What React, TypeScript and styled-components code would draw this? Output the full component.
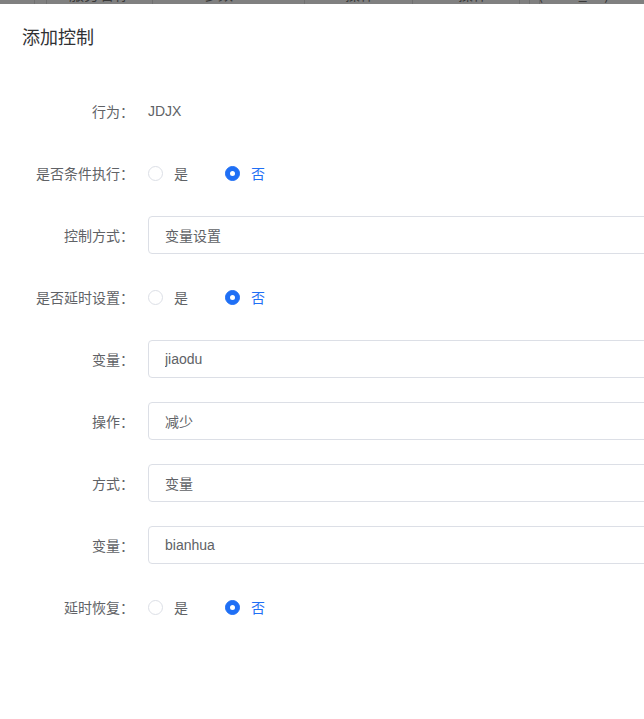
import React, { useState } from 'react'
import styled, { createGlobalStyle } from 'styled-components'

const GlobalStyle = createGlobalStyle`
  html, body {
    margin: 0;
    padding: 0;
    overflow: hidden;
    background: #7f7f7f;
  }
  * { box-sizing: border-box; }
`

const Page = styled.div`
  width: 644px;
  height: 719px;
  overflow: hidden;
  font-family: "Noto Sans CJK SC", "Noto Sans", "Liberation Sans", sans-serif;
`

// the table header behind the modal mask, only its bottom edge shows
const Backdrop = styled.div`
  height: 4px;
  overflow: hidden;
  background: #808080;
  display: flex;
`

const BackCell = styled.div<{ $w: number }>`
  flex: 0 0 ${p => p.$w}px;
  height: 4px;
  border-right: 1px solid #707070;
  position: relative;
  overflow: hidden;
`

const BackText = styled.span<{ $x: number }>`
  position: absolute;
  left: ${p => p.$x}px;
  top: -14px;
  font-size: 15px;
  line-height: 16px;
  color: #3a3a3a;
  white-space: nowrap;
`

const Dialog = styled.div`
  width: 900px;
  height: 715px;
  background: #fff;
`

const Header = styled.div`
  padding: 20px 22px 10px;
`

const Title = styled.h2`
  margin: 0;
  font-size: 18px;
  line-height: 24px;
  font-weight: 400;
  color: #303133;
`

const Form = styled.form`
  padding-top: 33px;
  display: flex;
  flex-direction: column;
  gap: 22px;
`

const Row = styled.div`
  display: flex;
  align-items: center;
  height: 40px;
`

const Label = styled.label`
  flex: 0 0 148px;
  padding-right: 14px;
  text-align: right;
  font-size: 14px;
  color: #606266;
`

const Plain = styled.span`
  font-family: "Liberation Sans", "Noto Sans CJK SC", sans-serif;
  font-size: 14px;
  color: #606266;
`

const Input = styled.input`
  width: 640px;
  height: 38px;
  border: 1px solid #dcdfe6;
  border-radius: 4px;
  padding: 0 16px;
  font-family: "Liberation Sans", "Noto Sans CJK SC", sans-serif;
  font-size: 14px;
  color: #606266;
  background: #fff;
  outline: none;
`

const RadioGroup = styled.div`
  display: flex;
  align-items: center;
`

const RadioItem = styled.label<{ $checked: boolean }>`
  display: flex;
  align-items: center;
  margin-right: 37px;
  cursor: pointer;
  font-size: 14px;
  color: ${p => (p.$checked ? '#1f6ff5' : '#606266')};
`

const Circle = styled.span<{ $checked: boolean }>`
  width: 15px;
  height: 15px;
  border-radius: 50%;
  margin-right: 11px;
  border: 1px solid ${p => (p.$checked ? '#1f6ff5' : '#dcdfe6')};
  background: ${p => (p.$checked ? '#1f6ff5' : '#fff')};
  display: flex;
  align-items: center;
  justify-content: center;

  &::after {
    content: '';
    width: 5px;
    height: 5px;
    border-radius: 50%;
    background: #fff;
    display: ${p => (p.$checked ? 'block' : 'none')};
  }
`

function YesNo({ value, onChange }: { value: boolean; onChange: (v: boolean) => void }) {
  return (
    <RadioGroup>
      <RadioItem $checked={value} onClick={() => onChange(true)}>
        <Circle $checked={value} />是
      </RadioItem>
      <RadioItem $checked={!value} onClick={() => onChange(false)}>
        <Circle $checked={!value} />否
      </RadioItem>
    </RadioGroup>
  )
}

export default function App() {
  const [conditional, setConditional] = useState(false)
  const [delayed, setDelayed] = useState(false)
  const [restore, setRestore] = useState(false)

  return (
    <Page>
      <GlobalStyle />
      <Backdrop>
        <BackCell $w={35} />
        <BackCell $w={12} />
        <BackCell $w={106}><BackText $x={22}>服务名称</BackText></BackCell>
        <BackCell $w={152}><BackText $x={50}>参数</BackText></BackCell>
        <BackCell $w={108}><BackText $x={40}>操作</BackText></BackCell>
        <BackCell $w={107}><BackText $x={45}>操作</BackText></BackCell>
        <BackCell $w={10} />
        <BackCell $w={10} />
        <BackCell $w={120}><BackText $x={-2}>(GPIO_A4)PWM</BackText></BackCell>
      </Backdrop>
      <Dialog>
        <Header>
          <Title>添加控制</Title>
        </Header>
        <Form onSubmit={e => e.preventDefault()}>
          <Row>
            <Label>行为：</Label>
            <Plain>JDJX</Plain>
          </Row>
          <Row>
            <Label>是否条件执行：</Label>
            <YesNo value={conditional} onChange={setConditional} />
          </Row>
          <Row>
            <Label>控制方式：</Label>
            <Input defaultValue="变量设置" />
          </Row>
          <Row>
            <Label>是否延时设置：</Label>
            <YesNo value={delayed} onChange={setDelayed} />
          </Row>
          <Row>
            <Label>变量：</Label>
            <Input defaultValue="jiaodu" />
          </Row>
          <Row>
            <Label>操作：</Label>
            <Input defaultValue="减少" />
          </Row>
          <Row>
            <Label>方式：</Label>
            <Input defaultValue="变量" />
          </Row>
          <Row>
            <Label>变量：</Label>
            <Input defaultValue="bianhua" />
          </Row>
          <Row>
            <Label>延时恢复：</Label>
            <YesNo value={restore} onChange={setRestore} />
          </Row>
        </Form>
      </Dialog>
    </Page>
  )
}
